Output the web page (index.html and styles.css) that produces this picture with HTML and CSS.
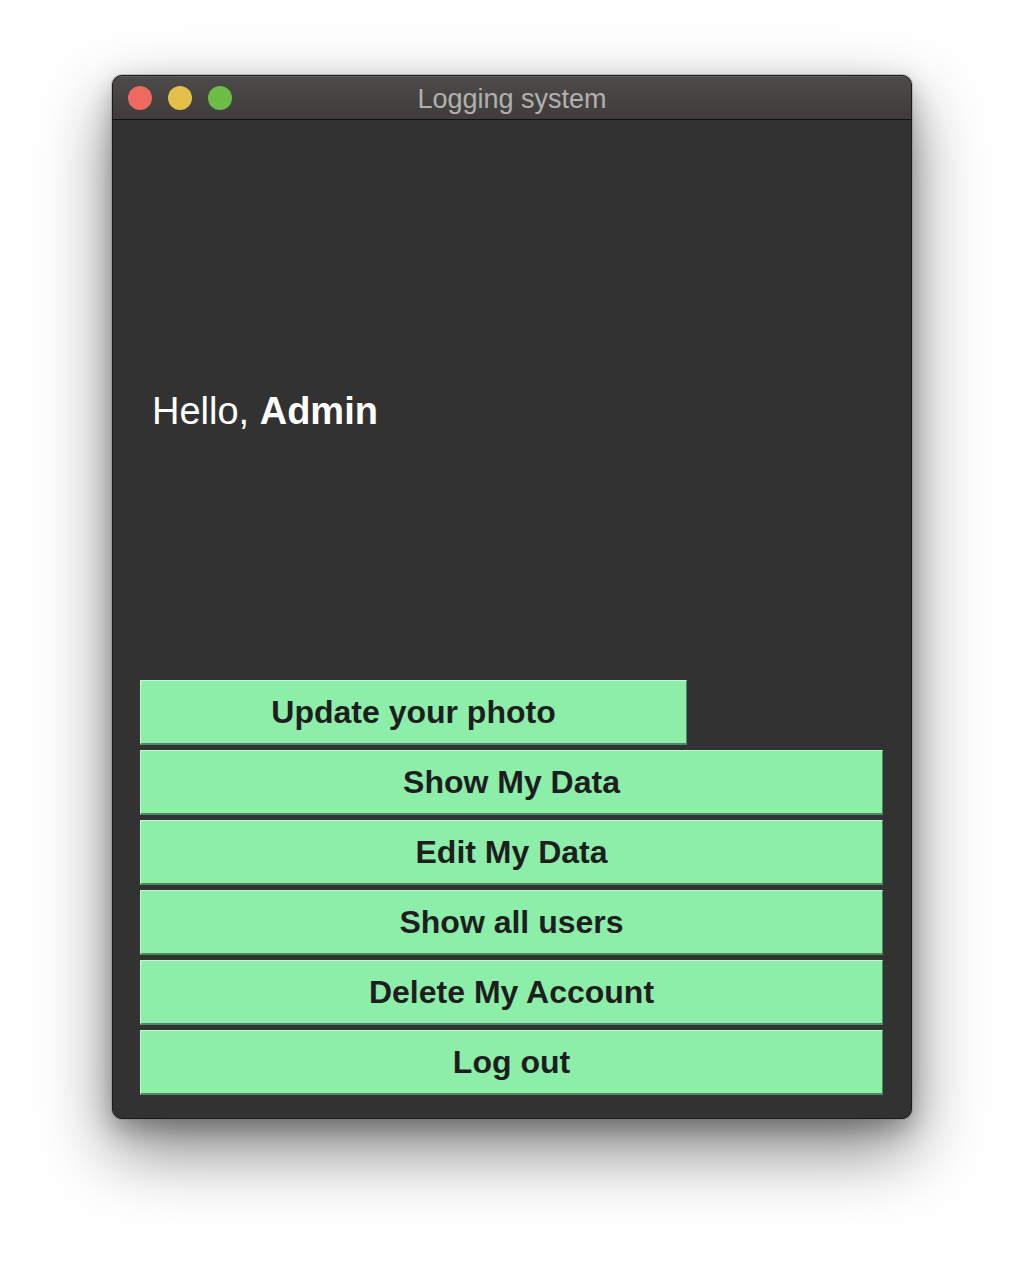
FILE: index.html
```html
<!DOCTYPE html>
<html>
<head>
<meta charset="utf-8">
<title>Logging system</title>
<link rel="stylesheet" href="styles.css">
</head>
<body>
<div class="window">
  <div class="titlebar">
    <div class="lights">
      <span class="light red"></span>
      <span class="light yellow"></span>
      <span class="light green"></span>
    </div>
    <div class="title">Logging system</div>
  </div>
  <div class="content">
    <div class="hello">Hello, <b>Admin</b></div>
    <div class="buttons">
      <button class="btn btn-short">Update your photo</button>
      <button class="btn">Show My Data</button>
      <button class="btn">Edit My Data</button>
      <button class="btn">Show all users</button>
      <button class="btn">Delete My Account</button>
      <button class="btn">Log out</button>
    </div>
  </div>
</div>
</body>
</html>
```

FILE: styles.css
```css
html, body {
  margin: 0;
  padding: 0;
  background: #ffffff;
}
body {
  height: 1268px;
  overflow: hidden;
}
.window {
  width: 800px;
  height: 1044px;
  margin: 75px 0 0 112px;
  box-sizing: border-box;
  border: 1px solid #1a1a1a;
  border-radius: 10px;
  background: #323232;
  box-shadow: 0 0 0 1px rgba(120,120,120,0.35), 0 30px 70px rgba(0,0,0,0.5), 0 10px 24px rgba(0,0,0,0.25);
  display: flex;
  flex-direction: column;
  overflow: hidden;
}
.titlebar {
  position: relative;
  height: 43px;
  flex: none;
  background: linear-gradient(#4d4b49, #3f3d3c);
  border-bottom: 1px solid #111111;
  box-shadow: inset 0 1px 0 rgba(255,255,255,0.12);
  display: flex;
  align-items: center;
  justify-content: center;
}
.lights {
  position: absolute;
  left: 15px;
  top: 10px;
  display: flex;
  gap: 16px;
}
.light {
  width: 24px;
  height: 24px;
  border-radius: 50%;
  display: block;
}
.red { background: #ee6a5e; }
.yellow { background: #e2bf4a; }
.green { background: #6cbe47; }
.title {
  font-family: "Liberation Sans", Arial, sans-serif;
  font-size: 27px;
  color: #b2b0ae;
  margin-top: 3px;
}
.content {
  flex: 1;
  display: flex;
  flex-direction: column;
  padding: 268px 28px 23px 27px;
}
.hello {
  font-family: "Liberation Sans", Arial, sans-serif;
  font-size: 38px;
  line-height: 46px;
  color: #ffffff;
  padding-left: 12px;
}
.hello b { font-weight: 700; }
.buttons {
  margin-top: auto;
  display: flex;
  flex-direction: column;
  gap: 5px;
}
.btn {
  display: block;
  width: 743px;
  height: 65px;
  box-sizing: border-box;
  background: #8ceea8;
  border-style: solid;
  border-width: 1px 1px 2px 1px;
  border-color: #c2fad2 #4a8a5c #4a8a5c #c2fad2;
  font-family: "Liberation Sans", Arial, sans-serif;
  font-weight: 700;
  font-size: 32px;
  color: #1e1e1e;
  padding: 0;
  text-align: center;
}
.btn-short {
  width: 547px;
}
```
